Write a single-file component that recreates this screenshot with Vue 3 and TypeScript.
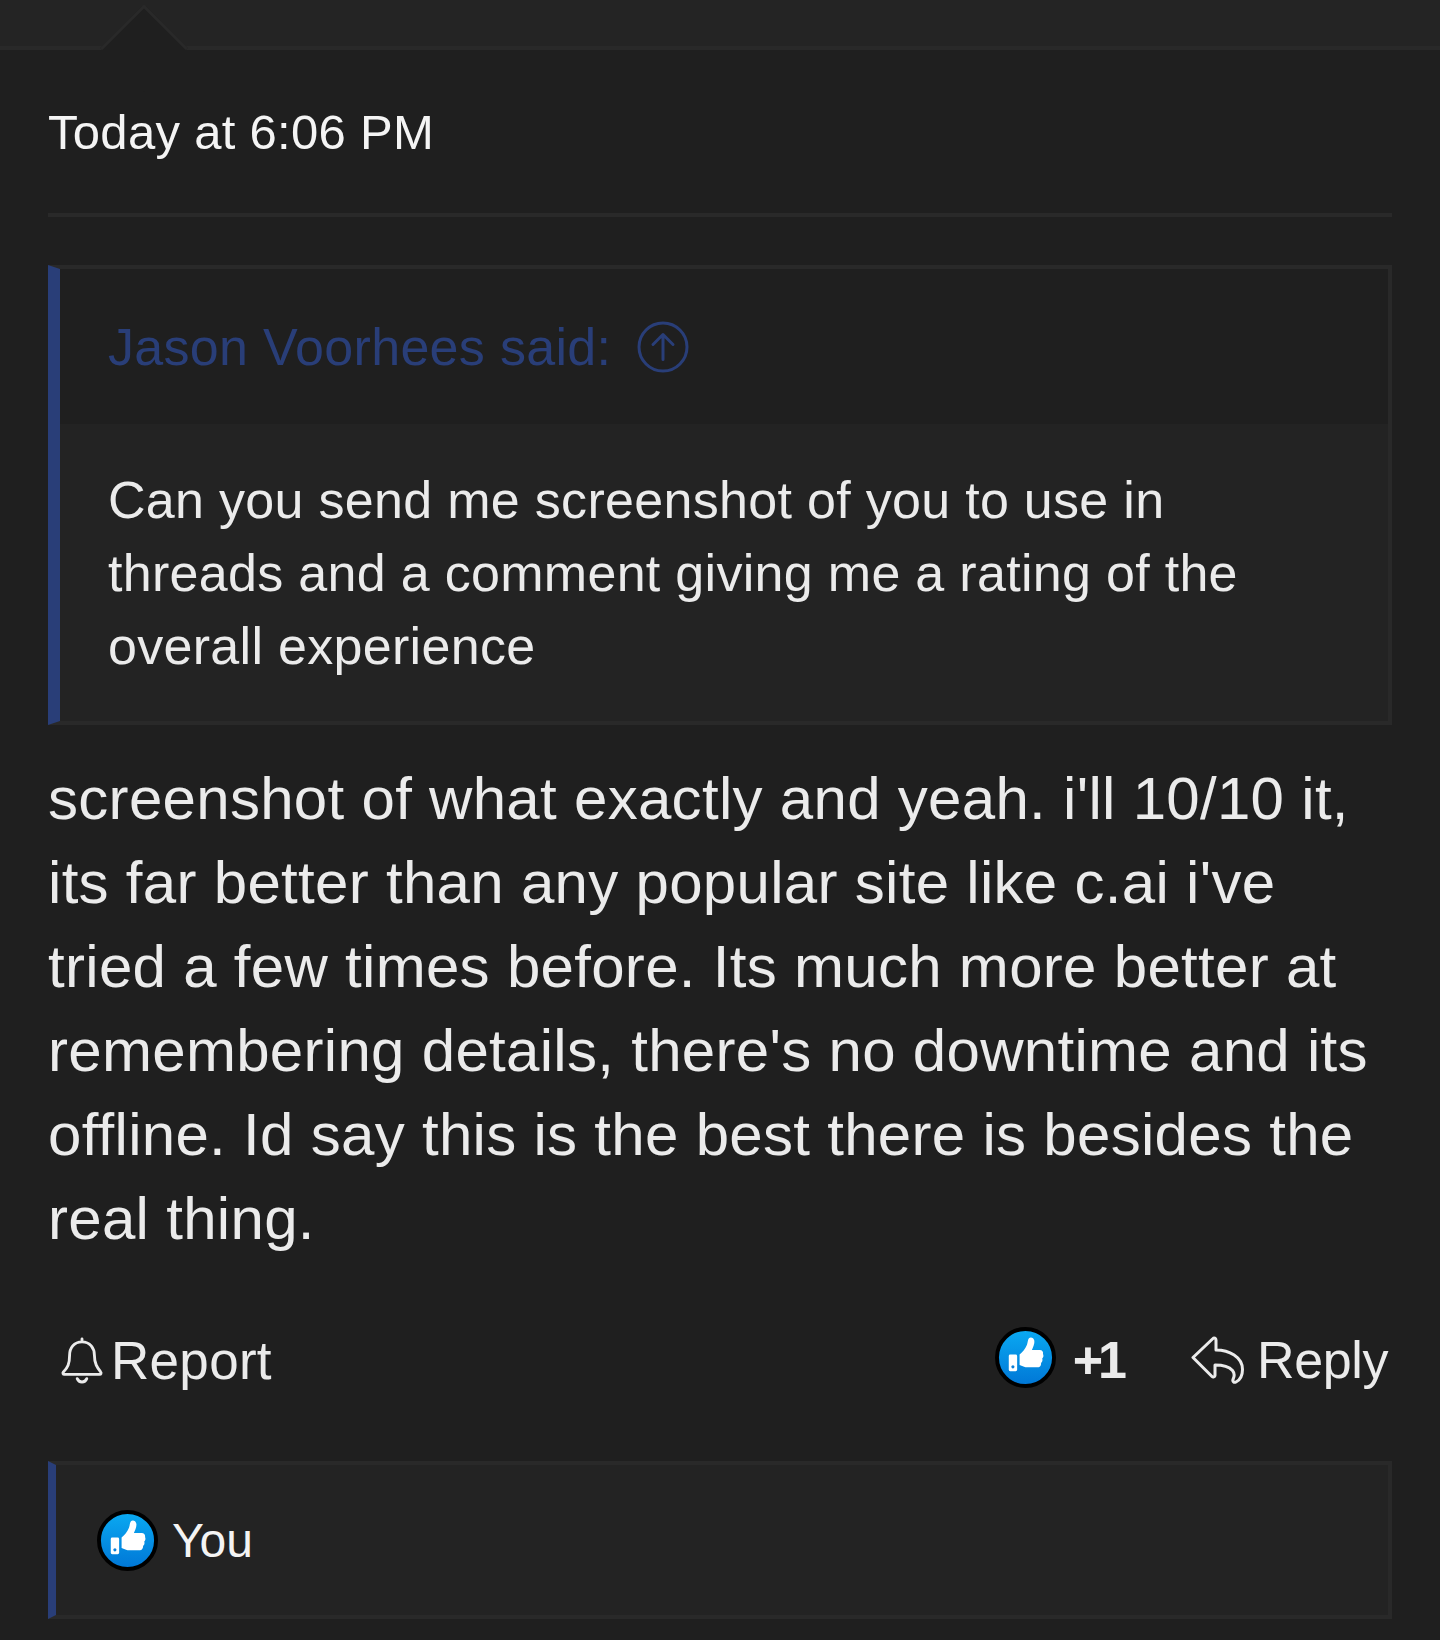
<template>
  <div class="post">
    <div class="topbar">
      <span class="arrow"></span>
    </div>

    <div class="content">
      <div class="date">Today at 6:06 PM</div>

      <blockquote class="quote">
        <div class="quote-head">
          <span>Jason Voorhees said:</span>
          <svg class="up-icon" width="52" height="52" viewBox="0 0 52 52" fill="none" stroke="currentColor" stroke-width="3">
            <circle cx="26" cy="26" r="24" />
            <path d="M26 38.500v-25M16 23.500 26 13.500l10 10" stroke-linecap="round" stroke-linejoin="round" />
          </svg>
        </div>
        <div class="quote-body">
          <span v-for="line in quoteLines" :key="line" class="line">{{ line }}</span>
        </div>
      </blockquote>

      <div class="message">
        <span v-for="line in messageLines" :key="line" class="line">{{ line }}</span>
      </div>

      <div class="actions">
        <div class="action report">
          <svg width="42" height="48" viewBox="0 0 44 50" fill="none" stroke="currentColor" stroke-width="3" stroke-linejoin="round" stroke-linecap="round">
            <path d="M22 3v3M22 6C13.500 6 9 12.500 9 20c0 9-2 13-6.500 17.500-1 1.200-.3 2.500 1 2.500h37c1.300 0 2-1.300 1-2.500C38 33 35 29 35 20c0-7.500-4.500-14-13-14Z" />
            <path d="M17 44.500c1 2.500 3 3.500 5 3.500s4-1 5-3.500" />
          </svg>
          <span>Report</span>
        </div>

        <div class="action-right">
          <svg class="like like-raised" width="61" height="61" viewBox="0 0 62 62">
            <use href="#like-icon" />
          </svg>
          <span class="count">+1</span>
          <div class="action reply">
            <svg width="54" height="48" viewBox="0 0 54 48" fill="none" stroke="currentColor" stroke-width="3" stroke-linejoin="round" stroke-linecap="round">
              <path d="M22 2.500 2 21.500 21 40.500c1 1 3 .5 3-1V29c7 0 13 .5 17.500 5.500 2 2.500 2 6 .5 9-.7 2 1 3.500 3 2.500 4-2 6.500-6.500 6.500-12.500C51.500 21 38 14 25 14V4c0-1.800-2-2.500-3-1.500Z" />
            </svg>
            <span class="reply-label">Reply</span>
          </div>
        </div>
      </div>

      <div class="reactions">
        <svg class="like" width="61" height="61" viewBox="0 0 62 62">
          <defs>
            <linearGradient id="like-grad" x1="0" y1="0" x2="0" y2="1">
              <stop offset="0" stop-color="#0aaaf2" />
              <stop offset="1" stop-color="#0076d6" />
            </linearGradient>
            <g id="like-icon">
              <circle cx="31" cy="31" r="29" fill="url(#like-grad)" stroke="#000" stroke-width="4" />
              <rect x="14" y="28" width="8.500" height="17" rx="1.500" fill="#fff" />
              <circle cx="18.200" cy="40.500" r="1.600" fill="#0b7fd8" />
              <path d="M25 28c3-2.500 6-6 7.500-10 .8-2 .8-5 2-6.500 1.500-1.800 5-.8 5.500 2.500.5 3-1.500 7-2.500 9.500h8c2.500 0 3.800 2 3.300 4 .8 1.500.5 3.500-.8 4.500.6 1.700.2 3.500-1.200 4.500.3 2-.8 4.500-3.300 4.500H33.500c-3.500 0-6-1.500-8.500-2.500Z" fill="#fff" />
            </g>
          </defs>
          <use href="#like-icon" />
        </svg>
        <span>You</span>
      </div>
    </div>
  </div>
</template>

<script setup lang="ts">
const quoteLines: string[] = [
  'Can you send me screenshot of you to use in',
  'threads and a comment giving me a rating of the',
  'overall experience',
]

const messageLines: string[] = [
  "screenshot of what exactly and yeah. i'll 10/10 it,",
  "its far better than any popular site like c.ai i've",
  'tried a few times before. Its much more better at',
  "remembering details, there's no downtime and its",
  'offline. Id say this is the best there is besides the',
  'real thing.',
]
</script>

<style>
body {
  background: #1f1f1f;
}
</style>

<style scoped>
.post {
  min-height: 1640px;
  background: #1f1f1f;
  color: #ebebeb;
  font-family: "Liberation Sans", Arial, sans-serif;
  overflow: hidden;
}

.topbar {
  position: relative;
  height: 46px;
  background: #242424;
  border-bottom: 4px solid #292929;
}
.arrow {
  position: absolute;
  left: 113px;
  top: 17px;
  width: 62px;
  height: 62px;
  box-sizing: border-box;
  background: #1f1f1f;
  border-top: 3px solid #292929;
  border-left: 3px solid #292929;
  transform: rotate(45deg);
}

.content {
  padding: 0 48px;
}

.date {
  height: 167px;
  box-sizing: border-box;
  padding-top: 51px;
  font-size: 49px;
  line-height: 62px;
  letter-spacing: .3px;
  color: #f4f4f4;
  border-bottom: 4px solid #292929;
}

.quote {
  margin: 48px 0 0;
  border: 4px solid #292929;
  border-left: 12px solid #293e78;
  background: #232323;
}
.quote-head {
  display: flex;
  align-items: center;
  gap: 26px;
  height: 155px;
  padding-left: 48px;
  background: #1f1f1f;
  color: #293e78;
  font-size: 52px;
  letter-spacing: .3px;
}
.up-icon {
  flex: none;
}
.quote-body {
  padding: 40px 48px 38px;
  font-size: 52px;
  line-height: 73px;
  letter-spacing: .3px;
}
.line {
  display: block;
  white-space: nowrap;
}

.message {
  margin-top: 32px;
  font-size: 60px;
  line-height: 84px;
  letter-spacing: .3px;
}

.actions {
  display: flex;
  justify-content: space-between;
  align-items: center;
  margin-top: 68px;
  height: 62px;
  font-size: 52px;
}
.action {
  display: flex;
  align-items: center;
}
.report {
  gap: 8px;
  padding-left: 13px;
  font-size: 53px;
  letter-spacing: .3px;
}
.action-right {
  display: flex;
  align-items: center;
  padding-right: 4px;
}
.count {
  margin-left: 17px;
  font-weight: 700;
  letter-spacing: -5px;
}
.reply {
  margin-left: 69px;
  gap: 12px;
}
.reply-label {
  letter-spacing: -.4px;
}
.like {
  flex: none;
}
.like-raised {
  margin-bottom: 6px;
}

.reactions {
  display: flex;
  align-items: center;
  gap: 14px;
  height: 150px;
  margin-top: 70px;
  padding-left: 41px;
  border: 4px solid #292929;
  border-left: 8px solid #293e78;
  background: #232323;
  font-size: 48px;
  color: #f4f4f4;
}
</style>
